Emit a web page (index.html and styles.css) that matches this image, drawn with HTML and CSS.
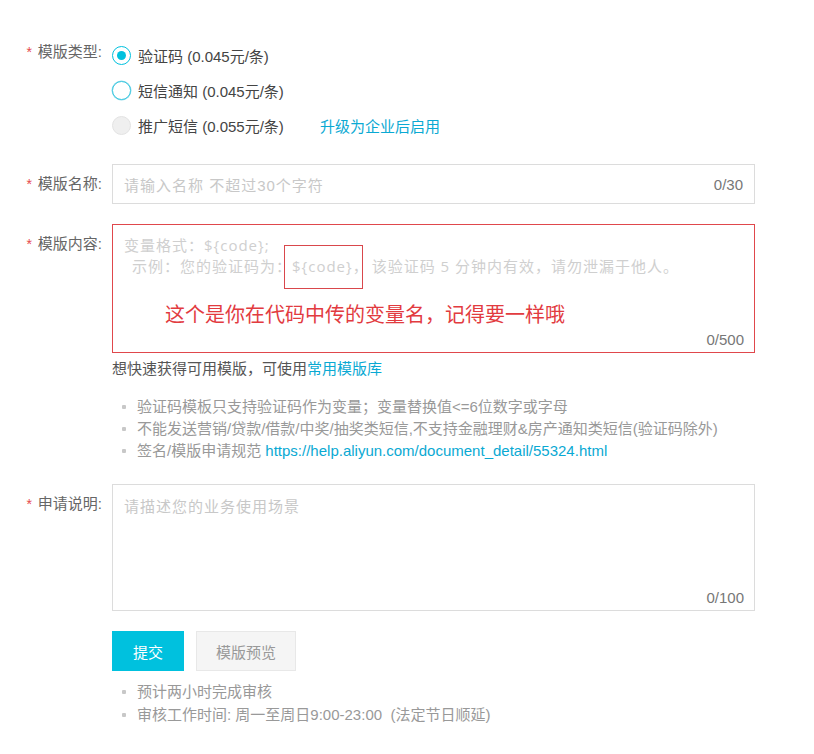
FILE: index.html
```html
<!DOCTYPE html>
<html lang="zh-CN">
<head>
<meta charset="utf-8">
<link rel="stylesheet" href="styles.css">
</head>
<body>
<form class="form">
  <div class="row row-type">
    <div class="label"><span class="req">*</span>模版类型:</div>
    <div class="options">
      <label class="opt"><span class="radio checked"></span><span class="opt-text">验证码 (0.045元/条)</span></label>
      <label class="opt"><span class="radio hover"></span><span class="opt-text">短信通知 (0.045元/条)</span></label>
      <label class="opt"><span class="radio disabled"></span><span class="opt-text">推广短信 (0.055元/条)</span><a class="link upgrade">升级为企业后启用</a></label>
    </div>
  </div>

  <div class="row row-name">
    <div class="label"><span class="req">*</span>模版名称:</div>
    <div class="field input">
      <span class="ph">请输入名称 不超过30个字符</span>
      <span class="count">0/30</span>
    </div>
  </div>

  <div class="row row-content">
    <div class="label"><span class="req">*</span>模版内容:</div>
    <div class="col">
      <div class="field area area-content">
        <div class="ph ph-mono">变量格式：${code};<br><span class="indent"></span>示例：您的验证码为：${code}，<span class="gap"></span>该验证码 5 分钟内有效，请勿泄漏于他人。</div>
        <span class="mark"></span>
        <div class="note">这个是你在代码中传的变量名，记得要一样哦</div>
        <span class="count">0/500</span>
      </div>
      <p class="help">想快速获得可用模版，可使用<a class="link">常用模版库</a></p>
      <ul class="tips">
        <li>验证码模板只支持验证码作为变量；变量替换值&lt;=6位数字或字母</li>
        <li>不能发送营销/贷款/借款/中奖/抽奖类短信,不支持金融理财&amp;房产通知类短信(验证码除外)</li>
        <li>签名/模版申请规范 <a class="link">https://help.aliyun.com/document_detail/55324.html</a></li>
      </ul>
    </div>
  </div>

  <div class="row row-desc">
    <div class="label"><span class="req">*</span>申请说明:</div>
    <div class="col">
      <div class="field area area-desc">
        <span class="ph">请描述您的业务使用场景</span>
        <span class="count">0/100</span>
      </div>
      <div class="buttons">
        <button type="button" class="btn primary">提交</button>
        <button type="button" class="btn secondary">模版预览</button>
      </div>
      <ul class="tips tips-bottom">
        <li>预计两小时完成审核</li>
        <li>审核工作时间: 周一至周日9:00-23:00&nbsp; (法定节日顺延)</li>
      </ul>
    </div>
  </div>
</form>
</body>
</html>
```
FILE: styles.css
```css
* { box-sizing: border-box; }
body {
  margin: 0;
  background: #fff;
  font-family: "Liberation Sans", Arial, "Noto Sans CJK SC", sans-serif;
  font-size: 15px;
  color: #333;
}
.form {
  padding-top: 32px;
  width: 814px;
}
.row {
  display: flex;
  align-items: flex-start;
}
.label {
  width: 112px;
  padding-right: 10px;
  text-align: right;
  line-height: 40px;
  color: #666;
  font-size: 15px;
  white-space: nowrap;
}
.req {
  color: #e5484d;
  margin-right: 6px;
  font-size: 14px;
}
.options {
  padding-top: 6px;
}
.opt {
  display: flex;
  align-items: center;
  height: 35px;
}
.radio {
  width: 19px;
  height: 19px;
  border-radius: 50%;
  border: 1px solid #00c1de;
  background: #fff;
  margin-right: 7px;
  position: relative;
  flex: none;
}
.radio.checked::after {
  content: "";
  position: absolute;
  left: 4px;
  top: 4px;
  width: 9px;
  height: 9px;
  border-radius: 50%;
  background: #00c1de;
}
.radio.hover {
  border: 1px solid #3cc8e0;
  box-shadow: 0 0 0 0.5px #8fdcec;
}
.radio.disabled {
  border-color: #e3e3e3;
  background: #efefef;
}
.opt-text { color: #444; }
.link {
  color: #0aa9d3;
  text-decoration: none;
}
.upgrade {
  margin-left: 36px;
}
.row-name { margin-top: 21px; }
.field {
  width: 643px;
  border: 1px solid #dcdcdc;
  position: relative;
  background: #fff;
}
.input {
  height: 40px;
  display: flex;
  align-items: center;
  justify-content: space-between;
  padding: 0 11px;
}
.ph {
  color: #c8c8c8;
  letter-spacing: 1px;
}
.count {
  color: #777;
}
.row-content { margin-top: 20px; }
.area {
  padding: 10px 10px 0 11px;
}
.area-content {
  height: 129px;
  border-color: #e0474c;
}
.ph-mono {
  font-family: "Open Sans", "Noto Sans CJK SC", sans-serif;
  line-height: 21px;
  color: #cfcfcf;
  font-size: 15px;
}
.indent {
  display: inline-block;
  width: 8px;
}
.gap {
  display: inline-block;
  width: 3px;
}
.mark {
  position: absolute;
  left: 171px;
  top: 20px;
  width: 79px;
  height: 44px;
  border: 1px solid #d9474c;
}
.note {
  position: absolute;
  left: 52px;
  top: 76px;
  font-family: "Noto Sans CJK SC", sans-serif;
  font-size: 20px;
  line-height: 26px;
  color: #e23b3f;
}
.area .count {
  position: absolute;
  right: 10px;
  bottom: 4px;
}
.help {
  margin: 6px 0 0;
  line-height: 20px;
  color: #555;
}
.tips {
  list-style: none;
  margin: 17px 0 0;
  padding: 0 0 0 10px;
  color: #999;
}
.tips li {
  line-height: 22px;
  position: relative;
  padding-left: 15px;
}
.tips li::before {
  content: "";
  position: absolute;
  left: 0;
  top: 9px;
  width: 4px;
  height: 4px;
  border-radius: 1px;
  background: #c8c8c8;
}
.row-desc { margin-top: 22px; }
.area-desc {
  height: 127px;
}
.buttons {
  display: flex;
  gap: 12px;
  margin-top: 20px;
}
.btn {
  height: 40px;
  font-family: "Liberation Sans", Arial, "Noto Sans CJK SC", sans-serif;
  font-size: 15px;
  border: 1px solid transparent;
  padding: 0;
}
.primary {
  width: 72px;
  background: #00c1de;
  color: #fff;
}
.secondary {
  width: 100px;
  background: #f5f5f5;
  border-color: #e8e8e8;
  color: #999;
}
.tips-bottom {
  margin-top: 9px;
}
.tips-bottom li { line-height: 23px; }
.tips-bottom li::before { top: 10px; }
```
